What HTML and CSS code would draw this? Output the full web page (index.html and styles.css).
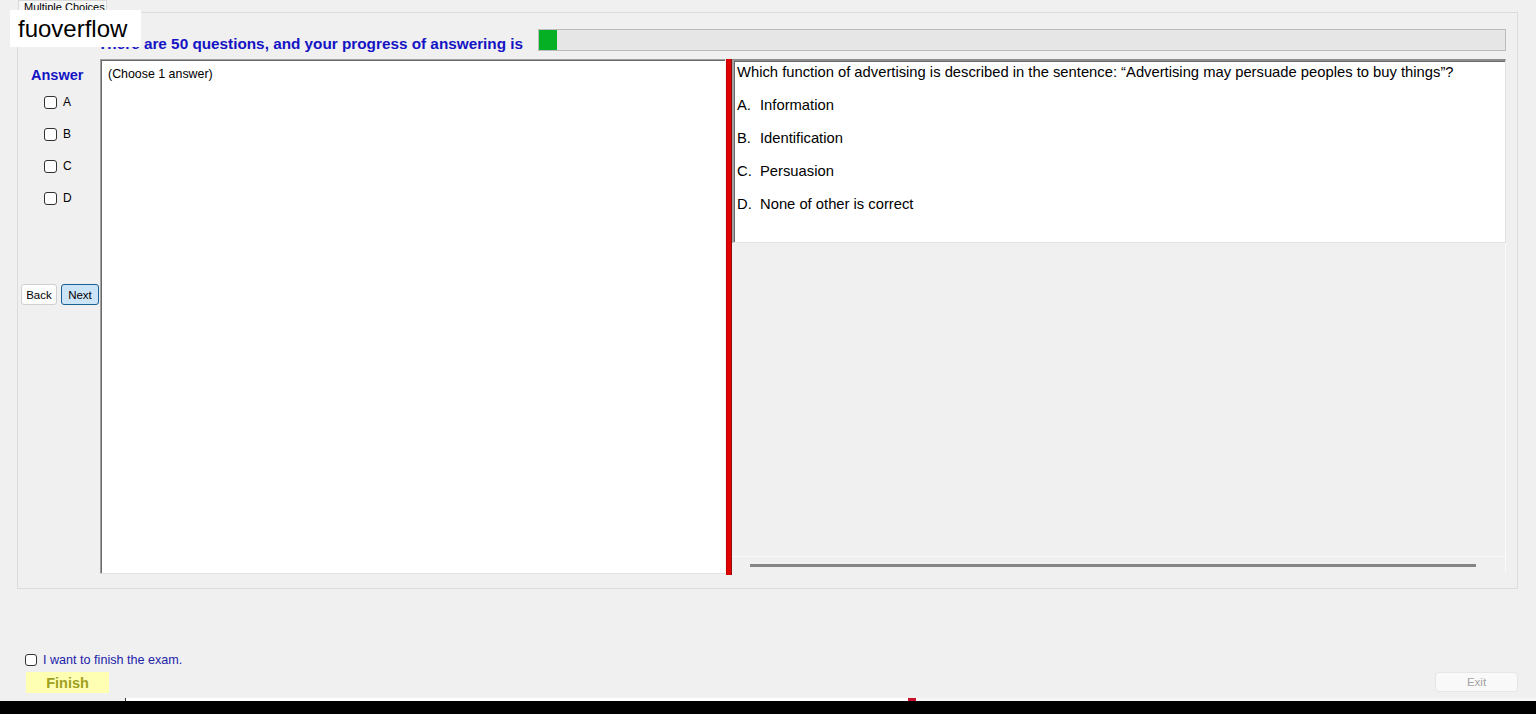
FILE: index.html
```html
<!DOCTYPE html>
<html lang="en">
<head>
    <meta charset="UTF-8">
    <meta name="viewport" content="width=device-width, initial-scale=1.0">
    <title>Multiple Choices</title>
    <link rel="stylesheet" href="styles.css">
</head>
<body>
    <div class="app">
        <div class="tabs">
            <span class="tab">Multiple Choices</span>
        </div>

        <div class="tab-page">
            <div class="progress-row">
                <span class="progress-title">There are 50 questions, and your progress of answering is</span>
                <div class="progress"><div class="progress-fill" style="width: 18px"></div></div>
            </div>

            <div class="work">
                <div class="answer-col">
                    <div class="answer-title">Answer</div>
                    <div class="options">
                        <label class="option"><span class="check"></span>A</label>
                        <label class="option"><span class="check"></span>B</label>
                        <label class="option"><span class="check"></span>C</label>
                        <label class="option"><span class="check"></span>D</label>
                    </div>
                    <div class="nav">
                        <button class="btn">Back</button>
                        <button class="btn btn-active">Next</button>
                    </div>
                </div>

                <div class="left-box">(Choose 1 answer)</div>

                <div class="splitter"></div>

                <div class="right-pane">
                    <div class="question-box">
                        <p>Which function of advertising is described in the sentence: “Advertising may persuade peoples to buy things”?</p>
                        <p><span class="letter">A.</span>Information</p>
                        <p><span class="letter">B.</span>Identification</p>
                        <p><span class="letter">C.</span>Persuasion</p>
                        <p><span class="letter">D.</span>None of other is correct</p>
                    </div>
                    <div class="pane-fill"></div>
                    <div class="hscroll"><div class="hscroll-line"></div></div>
                </div>
            </div>
        </div>

        <div class="footer">
            <div class="finish-col">
                <label class="finish-check"><span class="check"></span>I want to finish the exam.</label>
                <button class="finish-btn">Finish</button>
            </div>
            <button class="exit-btn">Exit</button>
        </div>

        <div class="taskbar">
            <div class="taskbar-edge">
                <span class="edge-gray"></span>
                <span class="edge-white"></span>
                <span class="edge-red"></span>
                <span class="edge-light"></span>
            </div>
            <div class="taskbar-black"></div>
        </div>

        <div class="watermark">fuoverflow</div>
    </div>
</body>
</html>
```

FILE: styles.css
```css
* {
    box-sizing: border-box;
}
body {
    margin: 0;
    background: #f0f0f0;
    font-family: "Liberation Sans", Arial, sans-serif;
    color: #000;
}
.app {
    position: relative;
    width: 1536px;
    height: 714px;
    display: flex;
    flex-direction: column;
    overflow: hidden;
}

/* tab strip */
.tabs {
    height: 12px;
    padding-left: 18px;
    display: flex;
}
.tab {
    width: 89px;
    height: 12px;
    border: 1px solid #dadada;
    border-bottom: 0;
    background: #f7f7f7;
    font-size: 11px;
    line-height: 12px;
    padding-left: 5px;
    overflow: hidden;
    white-space: nowrap;
}
.tab-page {
    height: 577px;
    margin: 0 18px 0 17px;
    border: 1px solid #dcdcdc;
}

/* progress */
.progress-row {
    height: 46px;
    display: flex;
    align-items: flex-start;
    padding-top: 16px;
}
.progress-title {
    width: 440px;
    margin-left: 80px;
    margin-top: 7px;
    font-size: 15.3px;
    line-height: 16px;
    font-weight: bold;
    color: #1414c4;
    white-space: nowrap;
}
.progress {
    width: 968px;
    height: 22px;
    border: 1px solid #bcbcbc;
    background: #e6e6e6;
}
.progress-fill {
    height: 100%;
    background: #06b025;
}

/* main area */
.work {
    display: flex;
    height: 516px;
}
.answer-col {
    width: 82px;
}
.answer-title {
    margin: 8px 0 0 13px;
    font-size: 14.5px;
    line-height: 16px;
    font-weight: bold;
    color: #1414c4;
}
.options {
    margin-top: 3px;
}
.option {
    height: 32px;
    display: flex;
    align-items: center;
    padding-left: 26px;
    font-size: 12px;
}
.check {
    width: 13px;
    height: 13px;
    border: 1px solid #333;
    border-radius: 3px;
    background: #fff;
    margin-right: 6px;
    flex: none;
}
.nav {
    margin: 70px 0 0 3px;
    display: flex;
    gap: 4px;
}
.btn {
    height: 21px;
    padding: 0;
    font-family: "Liberation Sans", Arial, sans-serif;
    font-size: 11.5px;
    border: 1px solid #d0d0d0;
    border-radius: 3px;
    background: #fdfdfd;
    color: #000;
}
.nav .btn:first-child {
    width: 36px;
}
.btn-active {
    width: 38px;
    background: #cce4f7;
    border-color: #1c5f92;
}
.left-box {
    width: 626px;
    height: 515px;
    background: #fff;
    border: 1px solid #fff;
    border-color: #a0a0a0 #f4f4f4 #e3e3e3 #a0a0a0;
    box-shadow: inset 1px 1px 0 #696969;
    padding: 7px 7px;
    font-size: 12.4px;
    line-height: 14px;
}
.splitter {
    width: 6px;
    height: 516px;
    background: #e00000;
    border-right: 1px solid #8a1010;
    border-left: 1px solid #c00000;
}
.right-pane {
    width: 774px;
    height: 514px;
    display: flex;
    flex-direction: column;
}
.question-box {
    height: 184px;
    background: #fff;
    border-top: 2px solid #8c8c8c;
    border-left: 2px solid #a0a0a0;
    border-right: 1px solid #e3e3e3;
    border-bottom: 1px solid #e3e3e3;
    box-shadow: inset 1px 1px 0 #6a6a6a;
    padding: 3px 0 0 3px;
    font-size: 14.77px;
    line-height: 17px;
}
.question-box p {
    margin: 0 0 16px;
    white-space: nowrap;
}
.letter {
    display: inline-block;
    width: 23px;
}
.pane-fill {
    flex: 1;
    border-right: 1px solid #fafafa;
}
.hscroll {
    height: 17px;
    border-top: 1px solid #fafafa;
    border-right: 1px solid #fafafa;
    padding: 7px 29px 0 18px;
}
.hscroll-line {
    height: 3px;
    background: #858585;
}

/* footer */
.footer {
    height: 109px;
    display: flex;
    align-items: flex-end;
    justify-content: space-between;
    padding: 0 18px 5px 25px;
}
.finish-col {
    display: flex;
    flex-direction: column;
}
.finish-check {
    height: 14px;
    display: flex;
    align-items: center;
    font-size: 12.6px;
    color: #2222aa;
    margin-bottom: 5px;
}
.finish-check .check {
    width: 12px;
    height: 12px;
}
.finish-btn {
    width: 83px;
    height: 21px;
    margin-left: 1px;
    border: 0;
    background: #ffffb4;
    color: #a0a020;
    font-family: "Liberation Sans", Arial, sans-serif;
    font-weight: bold;
    font-size: 14.5px;
    padding: 0;
}
.exit-btn {
    width: 83px;
    height: 20px;
    margin-bottom: 1px;
    border: 1px solid #e6e6e6;
    border-radius: 4px;
    background: #f9f9f9;
    color: #a3a3a3;
    font-family: "Liberation Sans", Arial, sans-serif;
    font-size: 11.5px;
    padding: 0;
}

/* bottom bar */
.taskbar {
    height: 16px;
    display: flex;
    flex-direction: column;
}
.taskbar-edge {
    height: 3px;
    display: flex;
}
.edge-gray {
    width: 126px;
    border-right: 1px solid #333;
}
.edge-white {
    width: 782px;
    background: #fff;
}
.edge-red {
    width: 8px;
    background: #c8102e;
}
.edge-light {
    flex: 1;
    background: #f6f6f6;
}
.taskbar-black {
    flex: 1;
    background: #000;
}

/* overlay label */
.watermark {
    position: absolute;
    left: 10px;
    top: 10px;
    width: 131px;
    height: 37px;
    background: #fff;
    font-size: 24px;
    line-height: 37px;
    padding-left: 8px;
}
```
